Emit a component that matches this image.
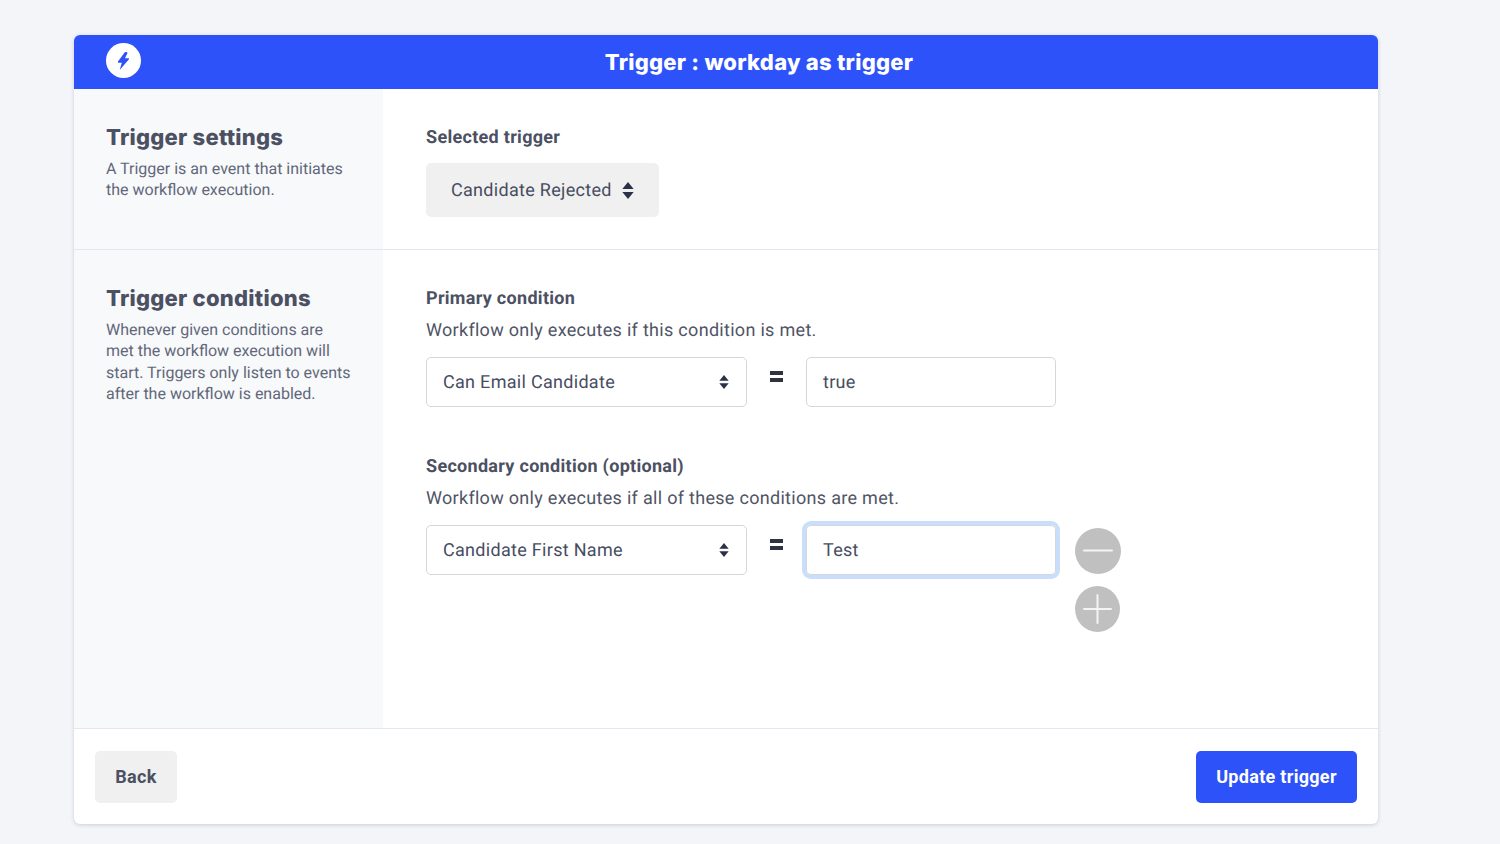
<div class="page">
  <div class="card">
    <header class="head">
      <span class="logo">
        <svg viewBox="0 0 12 17" width="13" height="18"><path d="M7.2 0.2 L0.8 9 Q0.3 10.2 1.5 10.2 L4.4 10.2 L2.4 17 L11.2 6.8 Q11.7 5.8 10.6 5.8 L7.4 5.8 L9.8 0.9 Q9.6 0 8.6 0 Z" fill="#2d52fa"/></svg>
      </span>
      <h1>Trigger : workday as trigger</h1>
    </header>

    <section class="row first">
      <aside class="side">
        <h2>Trigger settings</h2>
        <p>A Trigger is an event that initiates the workflow execution.</p>
      </aside>
      <div class="main">
        <div class="label">Selected trigger</div>
        <div class="trigger">
          <span>Candidate Rejected</span>
          <svg class="updown big" viewBox="0 0 12 18"><path d="M6 0 L12 7.4 H0 Z M6 18 L0 10.6 H12 Z" fill="#2b3147"/></svg>
        </div>
      </div>
    </section>

    <section class="row second">
      <aside class="side">
        <h2>Trigger conditions</h2>
        <p>Whenever given conditions are met the workflow execution will start. Triggers only listen to events after the workflow is enabled.</p>
      </aside>
      <div class="main">
        <div class="label">Primary condition</div>
        <div class="hint">Workflow only executes if this condition is met.</div>
        <div class="cond">
          <div class="select"><span>Can Email Candidate</span><svg class="updown" viewBox="0 0 12 18"><path d="M6 0 L12 7.4 H0 Z M6 18 L0 10.6 H12 Z" fill="#2b3147"/></svg></div>
          <span class="eq"></span>
          <div class="input">true</div>
        </div>

        <div class="label gap">Secondary condition (optional)</div>
        <div class="hint">Workflow only executes if all of these conditions are met.</div>
        <div class="cond">
          <div class="select"><span>Candidate First Name</span><svg class="updown" viewBox="0 0 12 18"><path d="M6 0 L12 7.4 H0 Z M6 18 L0 10.6 H12 Z" fill="#2b3147"/></svg></div>
          <span class="eq"></span>
          <div class="input focus">Test</div>
          <div class="actions">
            <button class="round" aria-label="Remove"><svg viewBox="0 0 46 46" width="46" height="46"><path d="M9 22.5 H37" stroke="#f4f4f4" stroke-width="2" stroke-linecap="round"/></svg></button>
            <button class="round plus" aria-label="Add"><svg viewBox="0 0 46 46" width="46" height="46"><path d="M9 23 H36 M22.5 9 V37" stroke="#f4f4f4" stroke-width="2" stroke-linecap="round"/></svg></button>
          </div>
        </div>
      </div>
    </section>

    <footer class="foot">
      <button class="btn back">Back</button>
      <button class="btn primary">Update trigger</button>
    </footer>
  </div>
</div>

<style>
  :global(body) {
    margin: 0;
    background: #f3f5f9;
  }
  .page {
    box-sizing: border-box;
    height: 844px;
    padding: 35px 122px 20px 74px;
    font-family: Roboto, "Liberation Sans", sans-serif;
    color: #474d5f;
    overflow: hidden;
    text-rendering: geometricPrecision;
  }
  .card {
    height: 789px;
    display: flex;
    flex-direction: column;
    background: #fff;
    border-radius: 6px;
    box-shadow: 0 1px 4px rgba(40, 50, 80, 0.2);
  }
  .head {
    height: 54px;
    flex: none;
    box-sizing: border-box;
    padding: 2px 0 0 66px;
    display: flex;
    align-items: center;
    justify-content: center;
    position: relative;
    background: #2d52fa;
    border-radius: 6px 6px 0 0;
  }
  .logo {
    position: absolute;
    left: 32px;
    top: 8px;
    width: 35px;
    height: 35px;
    border-radius: 50%;
    background: #fff;
    display: flex;
    align-items: center;
    justify-content: center;
  }
  h1 {
    margin: 0;
    font-family: Inter, "Open Sans", sans-serif;
    font-size: 22px;
    line-height: 52px;
    font-weight: 800;
    letter-spacing: 0.25px;
    color: #fff;
  }
  .row {
    display: flex;
  }
  .first {
    height: 161px;
    flex: none;
    box-sizing: border-box;
    border-bottom: 1px solid #e4e7f1;
  }
  .second {
    flex: 1;
    min-height: 0;
    border-bottom: 1px solid #e4e7f1;
  }
  .side {
    width: 309px;
    flex: none;
    box-sizing: border-box;
    background: #f8f9fb;
    padding: 34px 30px 0 32px;
  }
  h2 {
    margin: 0 0 5px;
    font-family: Inter, "Open Sans", sans-serif;
    font-size: 22px;
    line-height: 30px;
    font-weight: 800;
    letter-spacing: 0.25px;
    color: #4b5062;
  }
  .side p {
    margin: 0;
    font-size: 16px;
    line-height: 21.34px;
    color: #616779;
  }
  .main {
    flex: 1;
    padding: 37px 0 0 43px;
    letter-spacing: 0.3px;
  }
  .label {
    font-size: 18px;
    line-height: 24px;
    font-weight: 700;
    color: #4b5062;
  }
  .label.gap {
    margin-top: 48px;
  }
  .hint {
    margin-top: 9px;
    font-size: 18px;
    line-height: 22px;
    color: #4f5466;
  }
  .trigger {
    display: inline-flex;
    align-items: center;
    gap: 10.5px;
    height: 54px;
    margin-top: 13px;
    padding: 0 25px;
    background: #f0f0f0;
    border-radius: 5px;
    font-size: 18px;
    white-space: nowrap;
  }
  .updown {
    width: 10px;
    height: 14px;
  }
  .updown.big {
    width: 12px;
    height: 17px;
  }
  .cond {
    display: flex;
    align-items: flex-start;
    margin-top: 15px;
  }
  .select {
    box-sizing: border-box;
    width: 321px;
    height: 50px;
    display: flex;
    align-items: center;
    justify-content: space-between;
    padding: 0 17px 0 16px;
    border: 1px solid #d3d6dc;
    border-radius: 5px;
    font-size: 18px;
  }
  .eq {
    width: 13px;
    height: 11px;
    margin: 14px 23px 0 23px;
    box-sizing: border-box;
    border-top: 4px solid #2f3340;
    border-bottom: 4px solid #2f3340;
    flex: none;
  }
  .input {
    box-sizing: border-box;
    width: 250px;
    height: 50px;
    display: flex;
    align-items: center;
    padding: 0 16px;
    border: 1px solid #d3d6dc;
    border-radius: 5px;
    font-size: 18px;
  }
  .input.focus {
    box-shadow: 0 0 0 4px #c8defb;
  }
  .actions {
    display: flex;
    flex-direction: column;
    gap: 12px;
    margin: 3px 0 0 19px;
  }
  .round {
    width: 46px;
    height: 46px;
    padding: 0;
    border: 0;
    border-radius: 50%;
    background: #c0c0c0;
    display: block;
    overflow: hidden;
  }
  .round.plus {
    width: 45px;
  }
  .round svg {
    display: block;
  }
  .foot {
    height: 95px;
    flex: none;
    box-sizing: border-box;
    display: flex;
    justify-content: space-between;
    align-items: flex-start;
    padding: 22px 21px 0;
  }
  .btn {
    height: 52px;
    border: 0;
    padding: 0 0 2px;
    border-radius: 5px;
    font-family: Roboto, "Liberation Sans", sans-serif;
    font-size: 18px;
    font-weight: 700;
    letter-spacing: 0.3px;
  }
  .back {
    width: 82px;
    background: #f0f0f0;
    color: #4b5062;
  }
  .primary {
    width: 161px;
    background: #2d52fa;
    color: #fff;
  }
</style>
